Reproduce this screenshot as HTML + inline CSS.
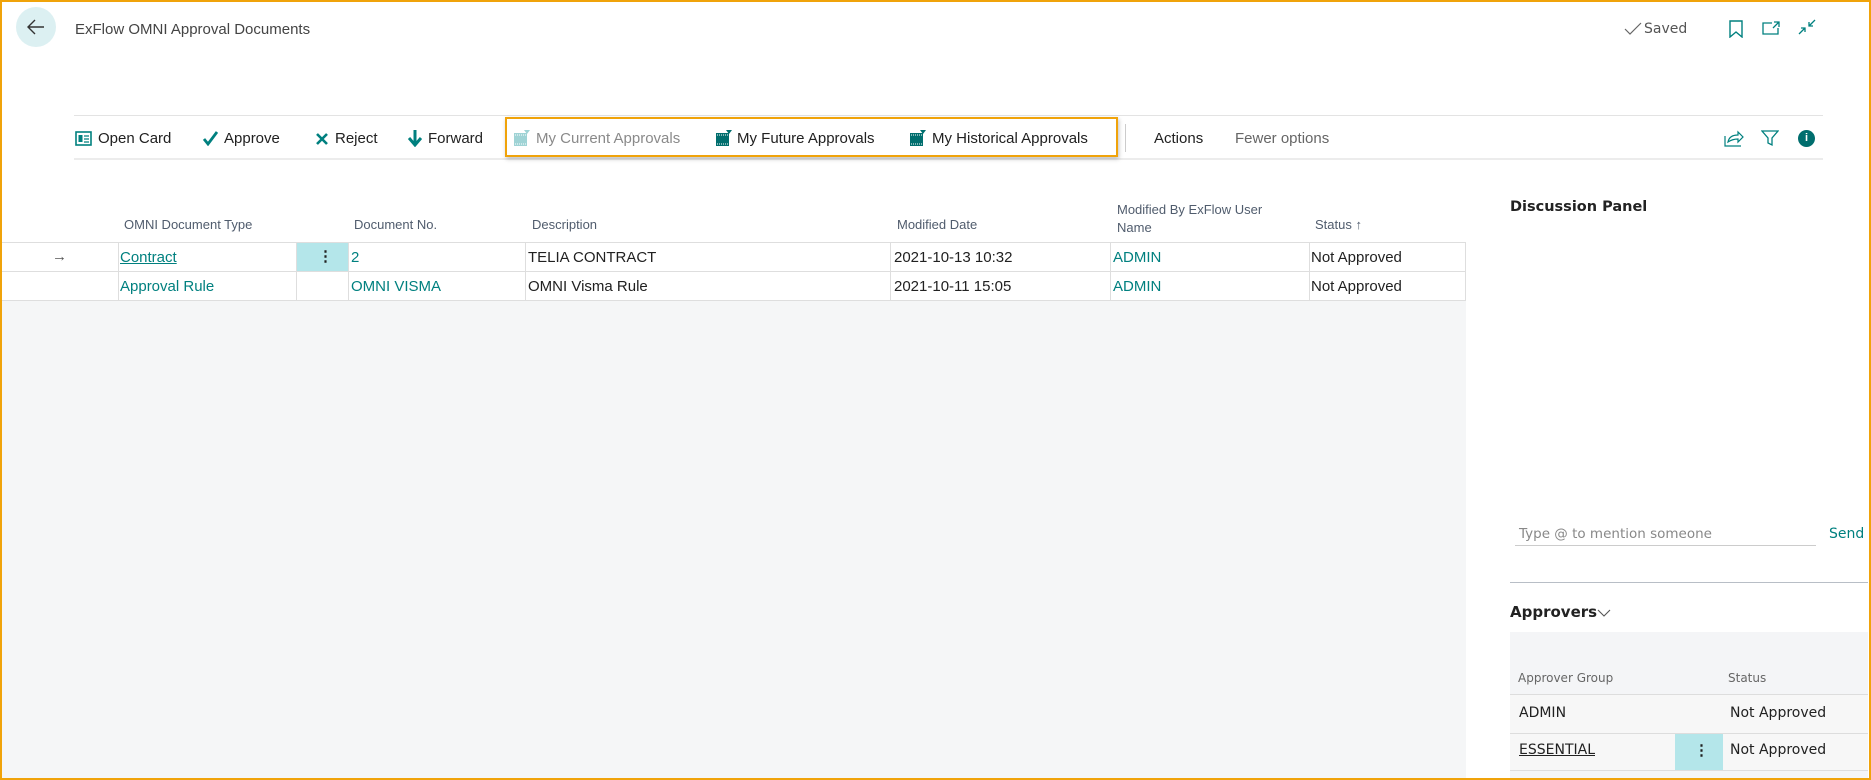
<!DOCTYPE html>
<html><head><meta charset="utf-8">
<style>
*{margin:0;padding:0;box-sizing:border-box}
body{width:1871px;height:780px;overflow:hidden;background:#fff;font-family:"Liberation Sans",sans-serif;color:#212121;position:relative}
.a{position:absolute;white-space:nowrap}
.frame{position:absolute;left:0;top:0;width:1871px;height:780px;border:2px solid #f0a30a;pointer-events:none;z-index:10}
.tb{font-size:15px;color:#212121;top:130px}
.teal{color:#00807f}
.hd{font-size:13px;color:#505c6d}
.cell{font-size:15px}
.rp{font-family:"DejaVu Sans",sans-serif}
</style></head><body>
<div class="frame"></div>
<div class="a" style="left:16px;top:7px;width:40px;height:40px;border-radius:50%;background:#dcf0f2"></div>
<svg class="a" style="left:26px;top:18px" width="20" height="18" viewBox="0 0 20 18"><path d="M18 9H2M9 2L2 9l7 7" stroke="#333" stroke-width="1.4" fill="none"/></svg>
<div class="a" style="left:75px;top:21px;font-size:15px;color:#444">ExFlow OMNI Approval Documents</div>
<svg class="a" style="left:1624px;top:22px" width="18" height="14"><path d="M1 7l5 5L17 1" stroke="#666" stroke-width="1.2" fill="none"/></svg>
<div class="a rp" style="left:1644px;top:21px;font-size:14px;color:#555">Saved</div>
<svg class="a" style="left:1728px;top:20px" width="16" height="18"><path d="M2 1h12v16l-6-5-6 5z" stroke="#00807f" stroke-width="1.4" fill="none"/></svg>
<svg class="a" style="left:1762px;top:20px" width="20" height="16"><path d="M10 3H1v11h15V8M12 2h5v5M17 2l-6 6" stroke="#00807f" stroke-width="1.3" fill="none"/></svg>
<svg class="a" style="left:1797px;top:18px" width="20" height="18"><path d="M2 16l6-6M4 10h4v4M18 2l-6 6M12 4v4h4" stroke="#00807f" stroke-width="1.3" fill="none"/></svg>
<div class="a" style="left:74px;top:115px;width:1749px;height:1px;background:#e3e3e3"></div>
<div class="a" style="left:74px;top:158px;width:1749px;height:2px;background:#ececec"></div>
<svg class="a" style="left:75px;top:131px" width="17" height="15"><rect x="1" y="1" width="15" height="13" fill="#fff" stroke="#00807f" stroke-width="1.6"/><rect x="3.5" y="4" width="4" height="7" fill="#00807f"/><path d="M9 5h5M9 8h5M9 11h5" stroke="#00807f" stroke-width="1.2"/></svg>
<div class="a tb" style="left:98px">Open Card</div>
<svg class="a" style="left:202px;top:131px" width="16" height="15"><path d="M2 8l4 5L15 1" stroke="#00807f" stroke-width="2.8" fill="none"/></svg>
<div class="a tb" style="left:224px">Approve</div>
<svg class="a" style="left:315px;top:132px" width="14" height="14"><path d="M2 2l10 10M12 2L2 12" stroke="#00807f" stroke-width="2.6"/></svg>
<div class="a tb" style="left:335px">Reject</div>
<svg class="a" style="left:408px;top:129px" width="14" height="18"><path d="M7 1v13M1 9l6 7 6-7" stroke="#00807f" stroke-width="3" fill="none"/></svg>
<div class="a tb" style="left:428px">Forward</div>
<div class="a" style="left:505px;top:117px;width:613px;height:40px;border:2px solid #f0a30a;box-shadow:1px 2px 4px rgba(0,0,0,.25)"></div>
<svg class="a" style="left:513px;top:129px" width="18" height="18"><rect x="1" y="4" width="13" height="13" fill="#9fd3d5"/><path d="M11 1h6l-3 4z" fill="#9fd3d5"/><path d="M2 6h11M2 15h11" stroke="#fff" stroke-width="1" stroke-dasharray="1 1"/></svg>
<div class="a tb" style="left:536px;color:#8a8a8a">My Current Approvals</div>
<svg class="a" style="left:715px;top:129px" width="18" height="18"><rect x="1" y="4" width="13" height="13" fill="#006e6e"/><path d="M11 1h6l-3 4z" fill="#006e6e"/><path d="M2 6h11M2 15h11" stroke="#fff" stroke-width="1" stroke-dasharray="1 1"/></svg>
<div class="a tb" style="left:737px">My Future Approvals</div>
<svg class="a" style="left:909px;top:129px" width="18" height="18"><rect x="1" y="4" width="13" height="13" fill="#006e6e"/><path d="M11 1h6l-3 4z" fill="#006e6e"/><path d="M2 6h11M2 15h11" stroke="#fff" stroke-width="1" stroke-dasharray="1 1"/></svg>
<div class="a tb" style="left:932px">My Historical Approvals</div>
<div class="a" style="left:1125px;top:124px;width:1px;height:28px;background:#ccc"></div>
<div class="a tb" style="left:1154px">Actions</div>
<div class="a tb" style="left:1235px;color:#666">Fewer options</div>
<svg class="a" style="left:1724px;top:129px" width="20" height="18"><path d="M1 7v10h16M4 13c1-5 5-7 10-7V3l5 5-5 5v-3c-4 0-7 1-10 3z" stroke="#00807f" stroke-width="1.2" fill="none"/></svg>
<svg class="a" style="left:1761px;top:129px" width="18" height="18"><path d="M1 2h16l-6 7v7l-4-2V9z" stroke="#00807f" stroke-width="1.3" fill="none"/></svg>
<div class="a" style="left:1798px;top:130px;width:17px;height:17px;border-radius:50%;background:#006e6e;color:#fff;font-size:11px;font-weight:bold;text-align:center;line-height:17px">i</div>
<div class="a" style="left:2px;top:301px;width:1464px;height:477px;background:#f5f6f7"></div>
<div class="a hd" style="left:124px;top:217px">OMNI Document Type</div>
<div class="a hd" style="left:354px;top:217px">Document No.</div>
<div class="a hd" style="left:532px;top:217px">Description</div>
<div class="a hd" style="left:897px;top:217px">Modified Date</div>
<div class="a hd" style="left:1117px;top:201px;line-height:18px">Modified By ExFlow User<br>Name</div>
<div class="a hd" style="left:1315px;top:217px">Status ↑</div>
<div class="a" style="left:2px;top:242px;width:1464px;height:1px;background:#dedede"></div>
<div class="a" style="left:2px;top:271px;width:1464px;height:1px;background:#dedede"></div>
<div class="a" style="left:2px;top:300px;width:1464px;height:1px;background:#dedede"></div>
<div class="a" style="left:1465px;top:242px;width:1px;height:59px;background:#dedede"></div>
<div class="a" style="left:296px;top:243px;width:52px;height:28px;background:#b4e6ea"></div>
<div class="a" style="left:118px;top:242px;width:1px;height:59px;background:#dedede"></div>
<div class="a" style="left:296px;top:242px;width:1px;height:59px;background:#dedede"></div>
<div class="a" style="left:348px;top:242px;width:1px;height:59px;background:#dedede"></div>
<div class="a" style="left:525px;top:242px;width:1px;height:59px;background:#dedede"></div>
<div class="a" style="left:890px;top:242px;width:1px;height:59px;background:#dedede"></div>
<div class="a" style="left:1110px;top:242px;width:1px;height:59px;background:#dedede"></div>
<div class="a" style="left:1309px;top:242px;width:1px;height:59px;background:#dedede"></div>
<div class="a cell" style="left:52px;top:248px;color:#555">→</div>
<div class="a cell" style="left:120px;top:249px;color:#00807f;text-decoration:underline">Contract</div>
<div class="a cell" style="left:318px;top:247px;font-weight:bold">⋮</div>
<div class="a cell teal" style="left:351px;top:249px">2</div>
<div class="a cell" style="left:528px;top:249px">TELIA CONTRACT</div>
<div class="a cell" style="left:894px;top:249px">2021-10-13 10:32</div>
<div class="a cell teal" style="left:1113px;top:249px">ADMIN</div>
<div class="a cell" style="left:1311px;top:249px">Not Approved</div>
<div class="a cell teal" style="left:120px;top:278px">Approval Rule</div>
<div class="a cell teal" style="left:351px;top:278px">OMNI VISMA</div>
<div class="a cell" style="left:528px;top:278px">OMNI Visma Rule</div>
<div class="a cell" style="left:894px;top:278px">2021-10-11 15:05</div>
<div class="a cell teal" style="left:1113px;top:278px">ADMIN</div>
<div class="a cell" style="left:1311px;top:278px">Not Approved</div>
<div class="a rp" style="left:1510px;top:199px;font-size:14.5px;font-weight:bold;color:#222">Discussion Panel</div>
<div class="a rp" style="left:1519px;top:526px;font-size:13.5px;color:#888">Type @ to mention someone</div>
<div class="a" style="left:1515px;top:545px;width:301px;height:1px;background:#ccc"></div>
<div class="a rp teal" style="left:1829px;top:526px;font-size:14px">Send</div>
<div class="a" style="left:1510px;top:582px;width:358px;height:1px;background:#b8bec6"></div>
<div class="a rp" style="left:1510px;top:603px;font-size:15px;font-weight:bold;color:#222">Approvers</div>
<svg class="a" style="left:1597px;top:609px" width="14" height="9"><path d="M1 1l6 6 6-6" stroke="#555" stroke-width="1.1" fill="none"/></svg>
<div class="a" style="left:1510px;top:632px;width:358px;height:146px;background:#f4f5f7"></div>
<div class="a rp" style="left:1518px;top:671px;font-size:12px;color:#666">Approver Group</div>
<div class="a rp" style="left:1728px;top:671px;font-size:12px;color:#666">Status</div>
<div class="a" style="left:1510px;top:694px;width:358px;height:1px;background:#ddd"></div>
<div class="a" style="left:1510px;top:695px;width:358px;height:38px;background:#f7f7f7"></div>
<div class="a" style="left:1510px;top:733px;width:358px;height:1px;background:#ddd"></div>
<div class="a" style="left:1510px;top:734px;width:358px;height:36px;background:#f7f7f7"></div>
<div class="a" style="left:1675px;top:734px;width:48px;height:36px;background:#b4e6ea"></div>
<div class="a" style="left:1510px;top:770px;width:358px;height:1px;background:#ddd"></div>
<div class="a rp" style="left:1519px;top:705px;font-size:14px">ADMIN</div>
<div class="a rp" style="left:1730px;top:705px;font-size:14px">Not Approved</div>
<div class="a rp" style="left:1519px;top:742px;font-size:14px;text-decoration:underline">ESSENTIAL</div>
<div class="a" style="left:1694px;top:741px;font-size:15px;font-weight:bold">⋮</div>
<div class="a rp" style="left:1730px;top:742px;font-size:14px">Not Approved</div>
</body></html>
